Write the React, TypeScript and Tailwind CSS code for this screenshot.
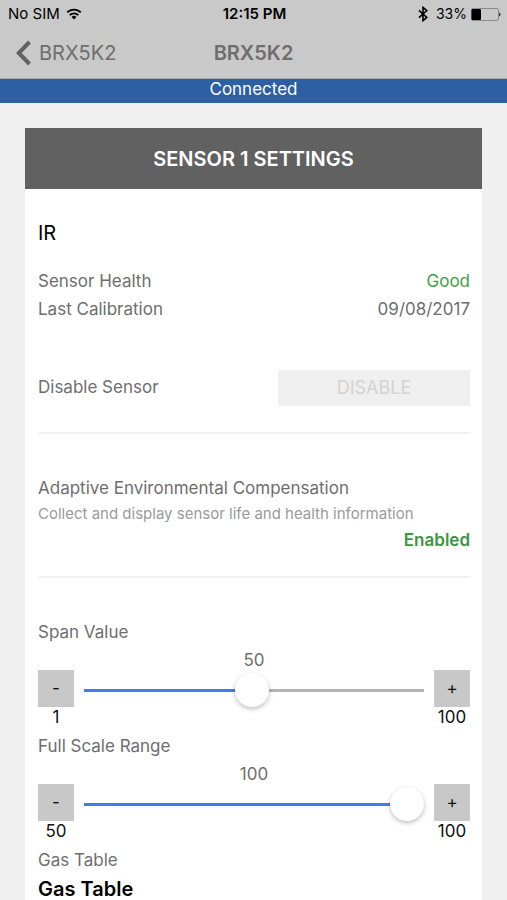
import React, { useState } from 'react';

interface SliderFieldProps {
  id: string;
  label: string;
  min: number;
  max: number;
  initial: number;
}

const WifiIcon = () => (
  <svg viewBox="0 0 16 12" className="h-3 w-4" fill="none" stroke="black" strokeWidth="1.9" aria-hidden="true">
    <path d="M1.2 4.4a9.6 9.6 0 0 1 13.6 0" />
    <path d="M3.7 7.1a6.1 6.1 0 0 1 8.6 0" />
    <path d="M8 11.6 5.5 9a3.5 3.5 0 0 1 5 0z" fill="black" stroke="none" />
  </svg>
);

const BluetoothIcon = () => (
  <svg viewBox="0 0 10 16" className="h-4 w-[10px]" fill="none" stroke="black" strokeWidth="1.6" aria-hidden="true">
    <path d="M1 4.4 8.8 11.4 5 14.6V1.4l3.8 3.2L1 11.6" />
  </svg>
);

const BatteryIcon = () => (
  <svg viewBox="0 0 30 13" className="h-[13px] w-[30px]" aria-hidden="true">
    <rect x="0.5" y="0.5" width="27" height="12" rx="1.5" fill="none" stroke="#8a8a8a" />
    <rect x="0.5" y="1" width="9.5" height="11" rx="1" fill="black" />
    <path d="M28.3 4.5c1.6.6 1.6 3.4 0 4z" fill="black" />
  </svg>
);

const SliderField: React.FC<SliderFieldProps> = ({ id, label, min, max, initial }) => {
  const [value, setValue] = useState(initial);
  const ratio = (value - min) / (max - min);

  const step = (delta: number) => {
    setValue((v) => Math.min(max, Math.max(min, v + delta)));
  };

  return (
    <div className="mb-[5px]">
      <label htmlFor={id} className="block leading-7">
        {label}
      </label>
      <output htmlFor={id} className="block pt-1 text-center leading-5">
        {value}
      </output>
      <div className="grid grid-cols-[36px_1fr_36px] gap-x-[10px] text-[#111]">
        <button
          type="button"
          aria-label={`Decrease ${label}`}
          onClick={() => step(-1)}
          className="h-[37px] bg-[#c8c8c8]"
        >
          -
        </button>
        <input
          id={id}
          type="range"
          min={min}
          max={max}
          value={value}
          onChange={(e) => setValue(Number(e.target.value))}
          style={{
            backgroundImage: `linear-gradient(to right, #3f7de8 ${ratio * 100}%, #b4b4b4 ${ratio * 100}%)`,
          }}
          className="h-[34px] w-full min-w-0 appearance-none self-end bg-[length:100%_3px] bg-center bg-no-repeat [&::-webkit-slider-thumb]:size-[34px] [&::-webkit-slider-thumb]:appearance-none [&::-webkit-slider-thumb]:rounded-full [&::-webkit-slider-thumb]:bg-white [&::-webkit-slider-thumb]:shadow-[0_2px_5px_rgba(0,0,0,0.25)]"
        />
        <button
          type="button"
          aria-label={`Increase ${label}`}
          onClick={() => step(1)}
          className="h-[37px] bg-[#c8c8c8]"
        >
          +
        </button>
        <span className="text-center leading-5">{min}</span>
        <span className="col-start-3 text-center leading-5">{max}</span>
      </div>
    </div>
  );
};

export default function App() {
  return (
    <div className="flex min-h-screen flex-col bg-[#f0f0f0] font-['Inter','Liberation_Sans',sans-serif] text-[17px] text-[#6e6e6e]">
      <header className="bg-[#c9c9c9]">
        <div className="grid h-7 grid-cols-3 items-center pr-1.5 pl-2 text-[15px] text-black">
          <div className="flex items-center gap-1.5">
            <span>No SIM</span>
            <WifiIcon />
          </div>
          <span className="text-center font-semibold">12:15 PM</span>
          <div className="flex items-center justify-end">
            <BluetoothIcon />
            <span className="mr-1 ml-2 text-sm">33%</span>
            <BatteryIcon />
          </div>
        </div>
        <nav className="grid h-[51px] grid-cols-[1fr_auto_1fr] items-center border-b border-[#a5a9b0] pr-4 pl-4 text-xl">
          <a href="#devices" className="flex items-center gap-2">
            <svg viewBox="0 0 15 26" className="h-[26px] w-[15px]" fill="none" stroke="#626262" strokeWidth="4" aria-hidden="true">
              <path d="M13.5 2 2.8 13l10.7 11" />
            </svg>
            BRX5K2
          </a>
          <h1 className="font-semibold">BRX5K2</h1>
        </nav>
      </header>
      <p className="bg-[#2d5fa5] pb-1 text-center leading-5 text-white">Connected</p>

      <main className="flex flex-1 flex-col px-[25px] pt-[25px]">
        <section className="flex-1 bg-white">
          <h2 className="bg-[#616161] pt-0.5 text-center text-xl leading-[59px] font-semibold text-white">
            SENSOR 1 SETTINGS
          </h2>
          <div className="pt-[30px] pr-3 pl-[13px]">
            <h3 className="mb-5 text-xl text-black">IR</h3>
            <dl className="grid grid-cols-[1fr_auto] leading-7">
              <dt>Sensor Health</dt>
              <dd className="text-right text-[#43a047]">Good</dd>
              <dt>Last Calibration</dt>
              <dd className="text-right">09/08/2017</dd>
            </dl>

            <div className="mt-[47px] flex items-center justify-between">
              <span id="disable-label">Disable Sensor</span>
              <button
                type="button"
                disabled
                aria-describedby="disable-label"
                className="h-9 w-48 bg-[#efefef] text-lg text-[#d3d3d3]"
              >
                DISABLE
              </button>
            </div>

            <hr className="mt-[26px] border-t-2 border-[#f0f0f0]" />

            <div className="mt-10">
              <p className="leading-7">Adaptive Environmental Compensation</p>
              <p className="text-[15px] leading-6 text-[#9a9a9a]">
                Collect and display sensor life and health information
              </p>
              <p className="text-right leading-7 font-semibold text-[#3c9640]">Enabled</p>
            </div>

            <hr className="mt-[22px] mb-10 border-t-2 border-[#f0f0f0]" />

            <SliderField id="span" label="Span Value" min={1} max={100} initial={50} />
            <SliderField id="range" label="Full Scale Range" min={50} max={100} initial={100} />

            <p className="leading-7">Gas Table</p>
            <h3 className="mt-1 text-xl leading-[22px] font-semibold text-black">Gas Table</h3>
          </div>
        </section>
      </main>
    </div>
  );
}
